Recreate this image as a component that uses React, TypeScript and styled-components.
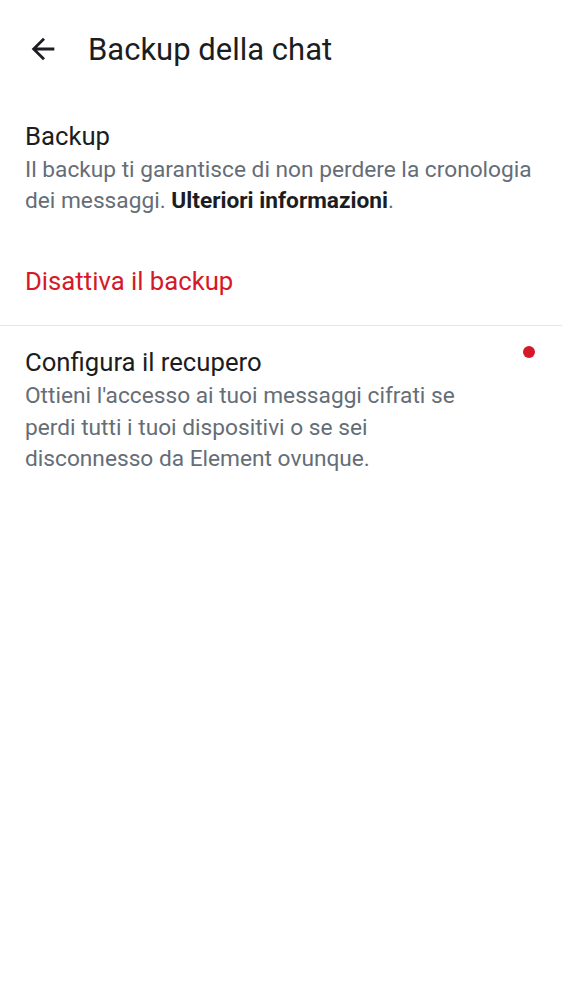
import React from "react";
import styled, { createGlobalStyle } from "styled-components";

const Global = createGlobalStyle`
  html, body { margin: 0; padding: 0; background: #ffffff; }
  body { font-family: Roboto, "Noto Sans", sans-serif; -webkit-font-smoothing: antialiased; }
`;

const Page = styled.div`
  width: 562px;
  min-height: 1000px;
  background: #ffffff;
  color: #1b1d22;
`;

const TopBar = styled.header`
  height: 100px;
  display: flex;
  align-items: center;
  padding-left: 26px;
  box-sizing: border-box;
`;

const BackButton = styled.button`
  width: 34px;
  height: 34px;
  padding: 0;
  border: none;
  background: none;
  display: flex;
  align-items: center;
  justify-content: center;
  color: #1b1d22;
  margin-right: 28px;
  margin-top: -2px;
`;

const Title = styled.h1`
  margin: 0;
  font-size: 31px;
  font-weight: 400;
  line-height: 36px;
  color: #1b1d22;
`;

const Section = styled.section<{ $top: number }>`
  padding: ${(p) => p.$top}px 25px 0 25px;
`;

const ItemTitle = styled.div`
  font-size: 25.7px;
  line-height: 35px;
  color: #1b1d22;
`;

const Description = styled.div<{ $lh: number }>`
  font-size: 22.7px;
  line-height: ${(p) => p.$lh}px;
  color: #656d77;
`;

const Strong = styled.b`
  font-weight: 700;
  color: #1b1d22;
`;

const DangerAction = styled.div`
  margin-top: 48px;
  padding-bottom: 26px;
  font-size: 25.7px;
  line-height: 35px;
  color: #d51928;
`;

const Divider = styled.hr`
  margin: 0;
  border: none;
  height: 1px;
  background: #e4e8ee;
`;

const Row = styled.div`
  display: flex;
  align-items: flex-start;
  gap: 66px;
  padding-right: 2px;
`;

const RowText = styled.div`
  flex: 1;
`;

const Dot = styled.span`
  flex: none;
  width: 12px;
  height: 12px;
  border-radius: 50%;
  background: #d51928;
  margin-top: 1px;
`;

export default function App() {
  return (
    <Page>
      <Global />
      <TopBar>
        <BackButton aria-label="Indietro">
          <svg width="34" height="34" viewBox="0 0 24 24" fill="currentColor">
            <path d="M20 11H7.83l5.59-5.59L12 4l-8 8 8 8 1.41-1.41L7.83 13H20v-2z" />
          </svg>
        </BackButton>
        <Title>Backup della chat</Title>
      </TopBar>
      <Section $top={19}>
        <ItemTitle>Backup</ItemTitle>
        <Description $lh={31}>
          Il backup ti garantisce di non perdere la cronologia dei messaggi.{" "}
          <Strong>Ulteriori informazioni</Strong>.
        </Description>
        <DangerAction>Disattiva il backup</DangerAction>
      </Section>
      <Divider />
      <Section $top={19}>
        <Row>
          <RowText>
            <ItemTitle>Configura il recupero</ItemTitle>
            <Description $lh={31.5}>
              Ottieni l'accesso ai tuoi messaggi cifrati se perdi tutti i tuoi dispositivi o se sei disconnesso da Element ovunque.
            </Description>
          </RowText>
          <Dot />
        </Row>
      </Section>
    </Page>
  );
}
